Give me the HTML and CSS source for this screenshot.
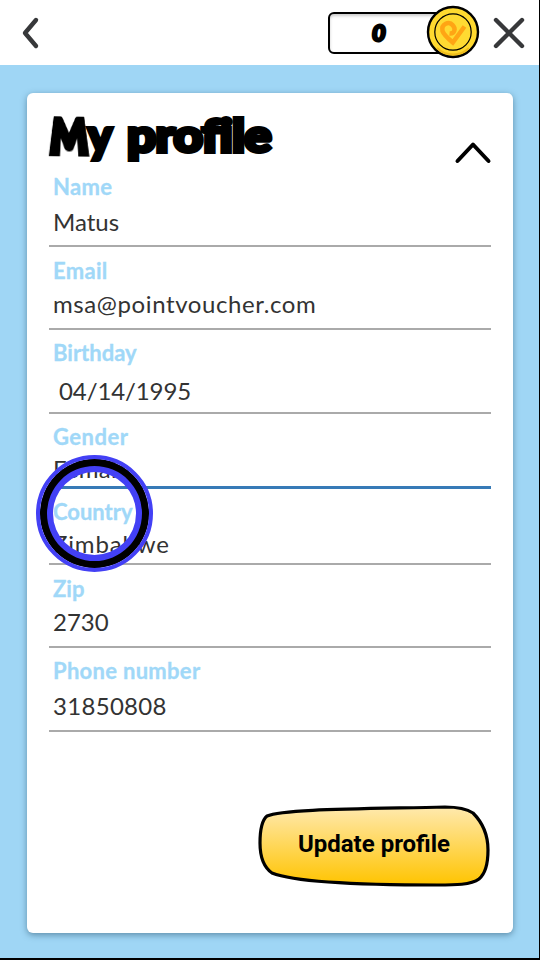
FILE: index.html
```html
<!DOCTYPE html>
<html lang="en">
<head>
<meta charset="utf-8">
<title>My profile</title>
<link rel="stylesheet" href="styles.css">
</head>
<body>
<header class="topbar">
  <svg class="back" width="20" height="34" viewBox="0 0 20 34"><path d="M16 4L5 17L16 30"/></svg>
  <div class="balance">
    <span class="points">0</span>
    <svg class="coin" width="54" height="54" viewBox="0 0 54 54">
      <circle cx="27" cy="27" r="25" fill="#ffd92f" stroke="#000" stroke-width="2.4"/>
      <path d="M11 43A23 23 0 0 0 43 43" fill="none" stroke="#efbd1c" stroke-width="2"/>
      <circle cx="27" cy="27" r="18.2" fill="#ffda32" stroke="#000" stroke-width="1.2"/>
      <path d="M23.5 28.5C28.5 29 30 24 27 20.5C23 15.5 15 19 16.5 26C17.5 29 22 33.5 26.8 37.5L38.5 21.5" fill="none" stroke="#ffa514" stroke-width="4.5"/>
    </svg>
  </div>
  <svg class="close" width="36" height="36" viewBox="0 0 36 36"><path d="M5 5L31 31M31 5L5 31"/></svg>
</header>
<main class="page">
  <section class="card">
    <div class="card-head">
      <h1><span class="cap">M</span><span class="low">y</span> <span class="word">profile</span></h1>
      <svg class="collapse" width="38" height="26" viewBox="0 0 38 26"><path d="M3.5 22L19 5.5L34.5 22"/></svg>
    </div>
    <form class="fields">
      <div class="field name"><label>Name</label><span class="value">Matus</span></div>
      <div class="field email"><label>Email</label><span class="value">msa@pointvoucher.com</span></div>
      <div class="field birthday"><label>Birthday</label><span class="value">04/14/1995</span></div>
      <div class="field gender"><label>Gender</label><span class="value">Female</span></div>
      <div class="field country"><label>Country</label><span class="value">Zimbabwe</span></div>
      <div class="field zip"><label>Zip</label><span class="value">2730</span></div>
      <div class="field phone"><label>Phone number</label><span class="value">31850808</span></div>
    </form>
    <button class="update" type="button">
      <svg class="shape" width="234" height="84" viewBox="0 0 234 84">
        <defs><linearGradient id="gold" x1="0" y1="0" x2="0" y2="1"><stop offset="0" stop-color="#ffe9ae"/><stop offset="1" stop-color="#ffc400"/></linearGradient></defs>
        <path d="M10 12C25 5 100 5 188 3C202 3 210 5 216 9C226 19 231 33 231 46C231 59 228 70 222 75C214 81 198 81 180 81C115 81 40 79 15 69C5 62 3 49 3 39C3 30 4 17 10 12Z" fill="url(#gold)" stroke="#000" stroke-width="3.2"/>
      </svg>
      <span class="update-text">Update profile</span>
    </button>
  </section>
</main>
<div class="touch"></div>
</body>
</html>
```

FILE: styles.css
```css
* { box-sizing: border-box; }
body {
  margin: 0;
  width: 540px;
  height: 960px;
  overflow: hidden;
  display: flex;
  flex-direction: column;
  border-right: 1px solid #000;
  border-bottom: 2px solid #000;
  background: #9fd6f5;
  font-family: Lato, "Open Sans", sans-serif;
  position: relative;
}
svg { display: block; flex: none; }
.topbar {
  height: 65px;
  flex: none;
  display: flex;
  align-items: center;
  background: #fff;
  padding: 0 12px 0 20px;
}
.back, .close, .collapse { fill: none; stroke: #37383a; stroke-width: 4.4; stroke-linecap: round; stroke-linejoin: round; }
.balance {
  position: relative;
  width: 126px;
  height: 42px;
  margin-left: auto;
  margin-right: 37px;
  border: 2px solid #000;
  border-radius: 6px;
  box-shadow: inset 0 2px 3px #ccc;
  display: flex;
  align-items: center;
}
.points {
  width: 98px;
  text-align: center;
  font-size: 22px;
  line-height: 24px;
  font-weight: 900;
  -webkit-text-stroke: 2.6px #000;
  transform: skewX(-6deg);
}
.coin { position: absolute; left: 96px; top: -8.5px; }
.page { padding: 28px 26px 0 27px; }
.card {
  height: 840px;
  display: flex;
  flex-direction: column;
  background: #fff;
  border-radius: 6px;
  box-shadow: 0 2px 6px rgba(30, 70, 95, .5);
  padding: 0 22px;
}
.card-head { height: 70px; flex: none; display: flex; justify-content: space-between; }
h1 {
  margin: 10px 0 0 -3px;
  width: 228px;
  display: flex;
  align-items: baseline;
  font-size: 45px;
  line-height: 60px;
  font-weight: 900;
  white-space: pre;
  -webkit-text-stroke: 4px #000;
}
.cap { width: 42px; font-size: 50px; -webkit-text-stroke-width: 6px; transform: perspective(80px) rotateX(28deg) rotate(1deg) scale(.84, 1.3); transform-origin: 46% 76%; }
.low { width: 39px; }
.word { letter-spacing: -.6px; transform: scaleX(1.135); transform-origin: left; }
.collapse { margin: 46px -1px 0 0; stroke: #000; stroke-width: 4; }
.fields { width: 442px; }
.field {
  padding: 12px 0 11px 4px;
  border-bottom: 2px solid #aaa;
  display: flex;
  flex-direction: column;
  justify-content: space-between;
  align-items: flex-start;
}
label { color: #a0d8f8; font-size: 22px; line-height: 24px; font-weight: 700; -webkit-text-stroke: .3px #a0d8f8; }
.value { color: #333; font-size: 24px; line-height: 24px; white-space: nowrap; }
.name { height: 84px; }
.name label, .email label, .phone label { letter-spacing: .3px; }
.email { height: 83px; padding-bottom: 12px; }
.email .value { letter-spacing: .6px; }
.birthday { height: 84px; padding-top: 11px; padding-bottom: 9px; }
.birthday .value { margin-left: 6px; letter-spacing: -.1px; }
.gender { height: 75px; padding-top: 11px; padding-bottom: 5px; border-bottom: 3px solid #377ab7; }
.gender label { letter-spacing: .5px; }
.gender .value { letter-spacing: .3px; }
.country { height: 76px; padding-top: 11px; padding-bottom: 7px; }
.country .value { letter-spacing: .85px; }
.zip { height: 83px; padding-bottom: 12px; }
.phone { height: 84px; padding-top: 11px; padding-bottom: 12px; }
.phone .value { letter-spacing: .3px; }
.update {
  position: relative;
  width: 234px;
  height: 84px;
  margin: 72px 0 0 auto;
  border: 0;
  padding: 0;
  background: none;
  display: grid;
  place-items: center;
}
.shape, .update-text { grid-area: 1 / 1; }
.update-text { font: 700 24px/30px Roboto, sans-serif; color: #000; white-space: nowrap; margin-top: -5px; }
.touch {
  position: absolute;
  left: 36px;
  top: 455px;
  width: 117px;
  height: 117px;
  border-radius: 50%;
  border: 4px solid #4340f5;
  box-shadow: inset 0 0 0 7px #000, inset 0 0 0 13px #4340f5;
}
```
